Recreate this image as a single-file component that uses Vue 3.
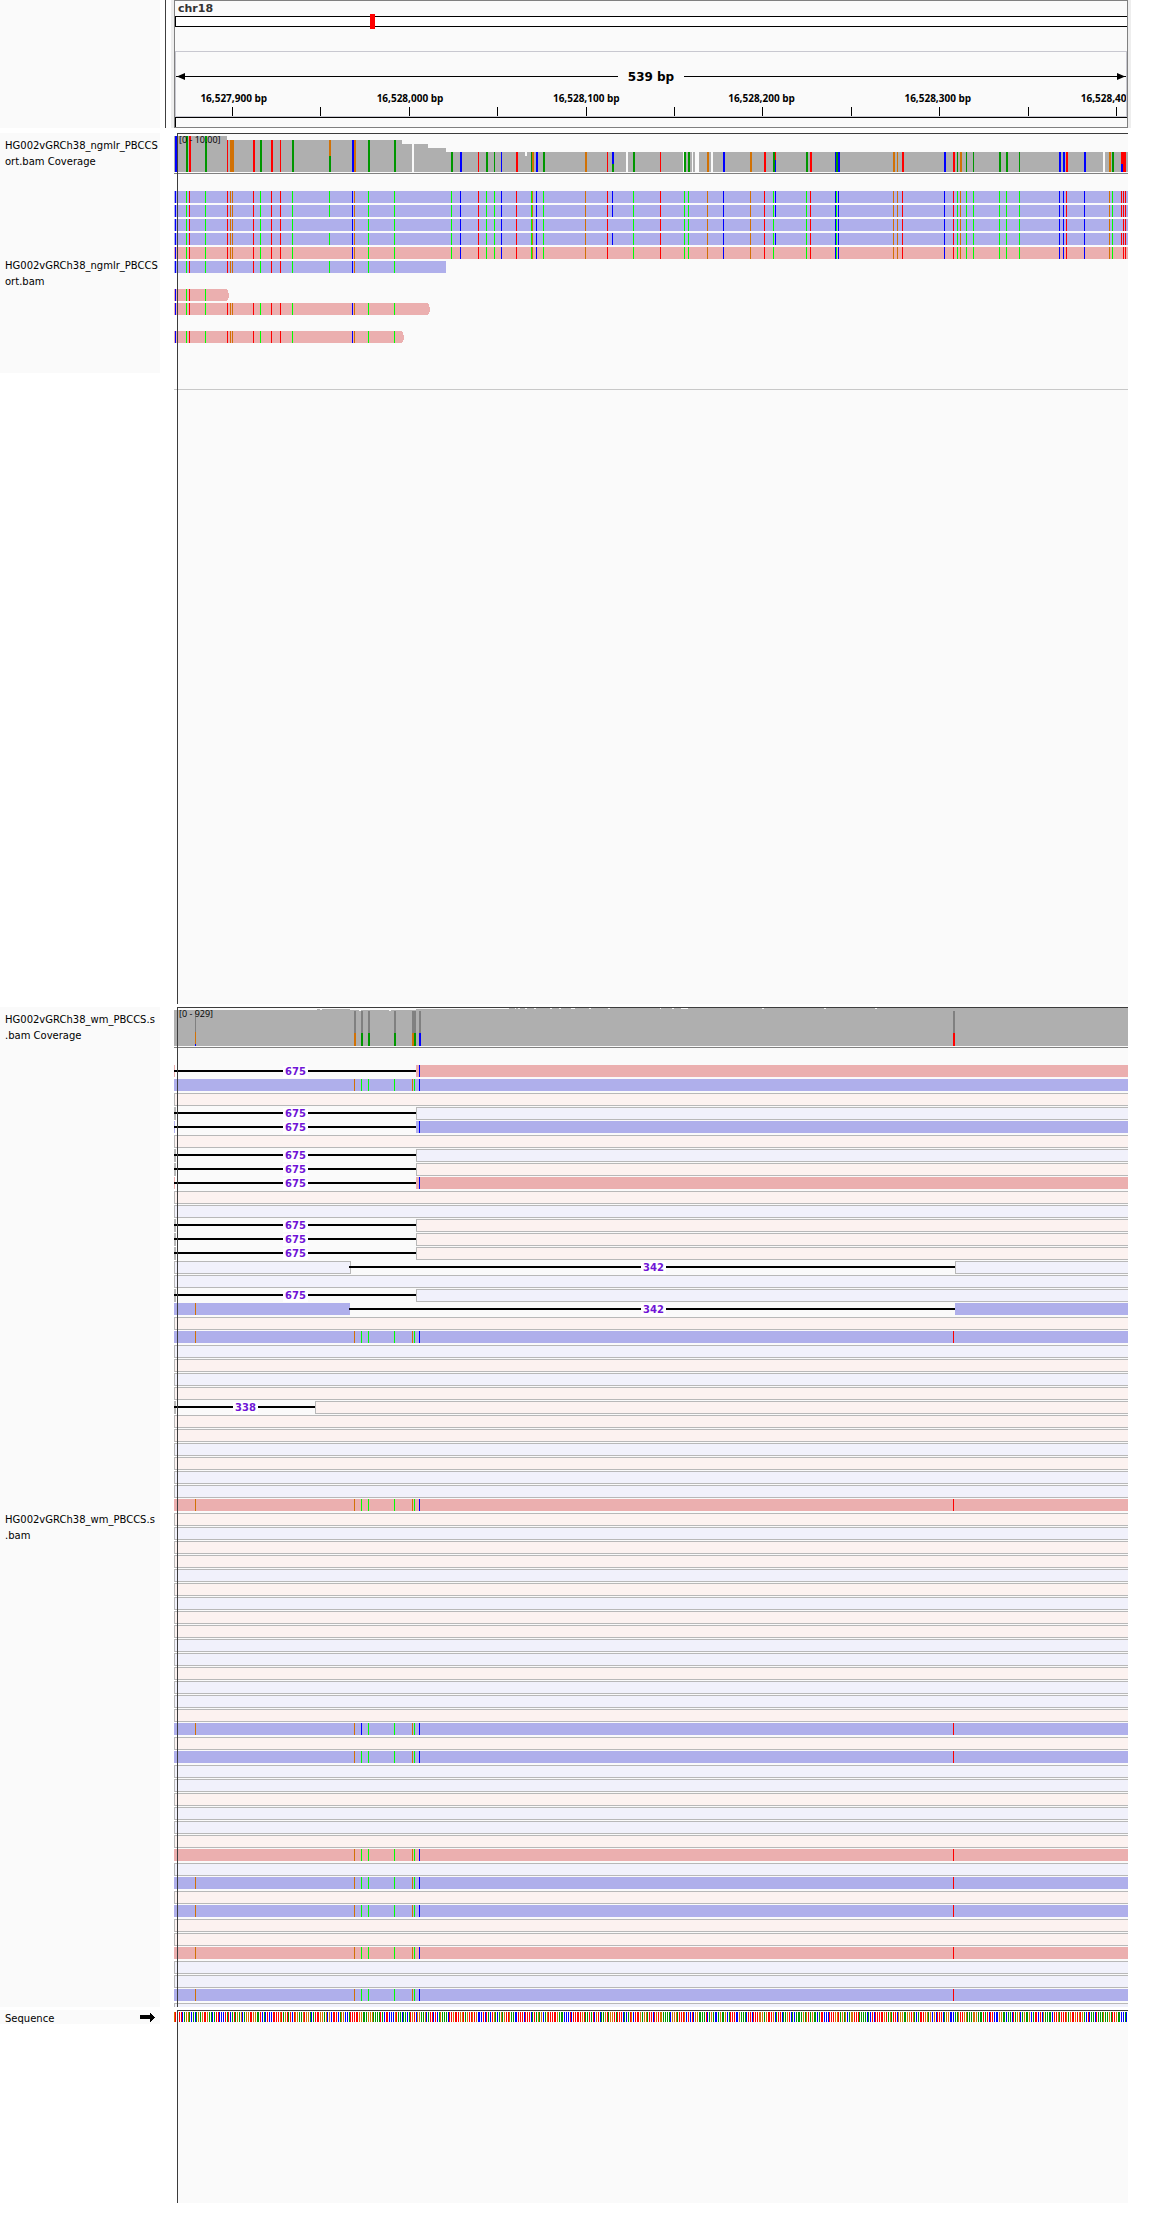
<script setup>
const W = 954
const X0 = 174
const pct = (x) => ((x - X0) / W) * 100 + '%'

const BASE = { A: '#009600', C: '#0000ff', G: '#d17105', T: '#ff0000' }
const READ_BASE = { ...BASE, A: '#00ff00' }

// Ruler
const ticks = [232, 320, 409, 497, 586, 674, 762, 851, 939, 1028, 1116]
const rulerLabels = [
  { x: 233, text: '16,527,900 bp' },
  { x: 410, text: '16,528,000 bp' },
  { x: 587, text: '16,528,100 bp' },
  { x: 763, text: '16,528,200 bp' },
  { x: 940, text: '16,528,300 bp' },
  { x: 1117, text: '16,528,400 bp' },
]

// First alignment: coverage steps [x1, x2, height]
const steps = [
  [174, 227, 36], [227, 402, 32], [402, 412, 28], [414, 428, 28], [428, 446, 24],
  [446, 525, 20], [525, 527, 16], [527, 626, 20], [628, 683, 20], [684, 692, 20],
  [693, 695, 20], [699, 711, 20], [713, 1103, 20], [1105, 1128, 20],
]
// Coverage mismatches [x, width, base, height]
const variants = [
  [175, 2, 'C', 36], [186, 2, 'A', 36], [189, 2, 'T', 36], [205, 2, 'A', 36],
  [227, 1, 'T', 32], [230, 4, 'G', 32], [253, 2, 'T', 32], [260, 2, 'A', 32],
  [271, 2, 'T', 32], [280, 1, 'T', 32], [292, 2, 'A', 32], [329, 2, 'G', 32],
  [329, 2, 'A', 16], [352, 2, 'C', 32], [354, 2, 'G', 32], [368, 2, 'A', 32],
  [394, 2, 'A', 32], [451, 2, 'A', 20], [460, 2, 'C', 20], [478, 1, 'T', 20],
  [486, 2, 'A', 20], [494, 1, 'A', 20], [501, 1, 'C', 20], [516, 2, 'T', 20],
  [531, 1, 'A', 20], [532, 2, 'G', 20], [536, 2, 'C', 20], [543, 2, 'A', 20],
  [585, 2, 'G', 20], [607, 1, 'T', 20], [612, 2, 'C', 20], [612, 2, 'A', 8],
  [633, 2, 'A', 20], [660, 1, 'T', 20], [684, 2, 'A', 20], [688, 2, 'A', 20],
  [707, 2, 'G', 20], [723, 2, 'C', 20], [750, 2, 'G', 20], [764, 2, 'T', 20],
  [773, 2, 'A', 20], [775, 1, 'T', 20], [775, 1, 'C', 12], [806, 2, 'A', 20],
  [810, 2, 'T', 20], [835, 1, 'C', 20], [836, 2, 'A', 20], [838, 2, 'C', 20],
  [893, 2, 'G', 20], [897, 1, 'G', 20], [902, 2, 'T', 20], [944, 2, 'C', 20],
  [953, 2, 'T', 20], [957, 1, 'A', 20], [960, 2, 'G', 20], [966, 1, 'A', 20],
  [973, 1, 'A', 20], [999, 2, 'A', 20], [1006, 2, 'A', 20], [1019, 1, 'A', 20],
  [1059, 2, 'C', 20], [1063, 2, 'C', 20], [1066, 2, 'T', 20], [1084, 2, 'C', 20],
  [1109, 2, 'G', 20], [1112, 2, 'A', 20], [1121, 5, 'T', 20], [1121, 2, 'C', 8],
]

const SNPS =
  '175C 186A 189T 205A 227T 230G 232G 253T 260A 271T 280T 292A 329A 352C 354G 368A 394A ' +
  '451A 460C 478T 486A 494A 501C 516T 531A 532G 536C 543A 585G 607T 612C 633A 660T 684A ' +
  '688A 707G 723C 750G 764T 773A 775C 806A 810T 835C 836A 838C 893G 897G 902T 944C 953T ' +
  '957A 960G 966A 973A 999A 1006A 1019A 1059C 1063C 1066T 1084C 1109G 1112A 1121T 1123T 1125T'
const parse = (s) => s.split(' ').filter(Boolean).map((t) => ({ x: +t.slice(0, -1), b: t.slice(-1) }))
const allSnps = parse(SNPS)
const partial = [329, 612, 775, 1121]
const snpsTo = (end, full) => allSnps.filter((s) => s.x < end && (full || !partial.includes(s.x)))

const reads1 = [
  { strand: 'rev', end: 1128, snps: snpsTo(1128, true) },
  { strand: 'rev', end: 1128, snps: snpsTo(1128, true) },
  { strand: 'rev', end: 1128, snps: snpsTo(1128, false) },
  { strand: 'rev', end: 1128, snps: snpsTo(1128, true) },
  { strand: 'fwd', end: 1128, snps: snpsTo(1128, false) },
  { strand: 'rev', end: 446, snps: snpsTo(446, true) },
  null,
  { strand: 'fwd', end: 227, tip: true, snps: snpsTo(227, false) },
  { strand: 'fwd', end: 428, tip: true, snps: snpsTo(428, false) },
  null,
  { strand: 'fwd', end: 402, tip: true, snps: snpsTo(402, false) },
]

// Second alignment
const notches = [
  [515, 1], [518, 2], [525, 2], [534, 2], [550, 2], [559, 2], [571, 4], [589, 2],
  [608, 2], [660, 1], [672, 2], [681, 7], [762, 2], [824, 2], [875, 2],
]
const variants2 = [
  [354, 'G'], [361, 'A'], [368, 'A'], [394, 'A'], [412, 'G'], [414, 'A'], [419, 'C'], [953, 'T'],
]

// P/B: solid forward/reverse read, p/b: faded read; number: deletion length; +: extra mismatch
const rowList = (
  'P675 B- p b675 B675 p b675 p675 P675 p b p675 p675 p675 b342 b b675 B342 p B+ b p b p p338 ' +
  'p p b p b b P+ p b p p b p b p p b b p b b p Bx p B ' +
  'b b p b b p P b B+ p B+ p p P+ b b B+ b'
).split(' ')
const gaps = {
  675: { from: 174, to: 416, label: 296 },
  342: { from: 349, to: 955, label: 654 },
  338: { from: 174, to: 315, label: 246 },
}
const common = '354G 361A 368A 394A 412G 414A 419C 953T'
const reads2 = rowList.map((code) => {
  const kind = code[0]
  const opt = code.slice(1)
  const gap = gaps[opt]
  const solid = kind === 'P' || kind === 'B'
  const strand = kind.toLowerCase() === 'p' ? 'fwd' : 'rev'
  let segs
  if (!gap) segs = [[174, 1130]]
  else if (opt === '342') segs = [[174, solid ? 350 : 351], [gap.to, 1130]]
  else segs = [[174, solid ? 175 : 176], [gap.to, 1130]]
  let snps = ''
  if (solid) {
    if (opt === '675') snps = '419C'
    else if (opt === '342') snps = '195G'
    else if (opt === '-') snps = common.replace(' 953T', '')
    else if (opt === '+') snps = '195G ' + common
    else if (opt === 'x') snps = '195G ' + common.replace('361A', '361C')
    else snps = common
  }
  return { solid, strand, segs, gap, len: gap ? opt : '', snps: parse(snps) }
})

// Reference sequence, in runs that start at a base index
const runs = [
  [0,
    'GTTTTCAGGACACAGAGTTGAACATTCCCTATCATAGAGCAGGTTGGAATCACTCCTTTTGTAGTATCTGGAAGTGGACATTTGGAGCGCTTTCAGGCCATTTTTGGAAAGGGAAAATACTTCCCGTAACAACATGTCGGAAGCATTCTCAGAAACTTGTTTGGTAGTGTCC'],
  [168,
    'TGTGCCCTCTACTGACAGAGTTGAACCTTTCTTTCATAGAGCAGTTTTTGAAACCCTCTTTTTGTAATATCGTCAAGTAGGTATTTCACATGCTTTGAGGATTCTGTGGAAAACGGGATTTGCTCTCGGAAAATCAGACCAGAAGCATTTCCGAAACTTCTTTGGGAGTTTGCATTCAAGTCACAAAG'],
  [355,
    'AGAGTAGAACATTCCCTTTGGTAGAGCAGGTTTAAAACACTCTTTTTGTAGATTCGGGAAGGTGACATTTGGAGCGCTTTCAGGCCCAAGTTGGAAAGGGAAATATCTTCCCGGAACAACTAGGCAGAAGCATTCTCGAAAACTTGATTTGAGTTGTGTGACTCAACTAAAGAAGATTGAACCACC'],
]
const bases = runs.flatMap(([start, seq], r) => {
  const end = r < 2 ? runs[r + 1][0] : 540
  const out = []
  for (let i = start; i < end; i++) {
    const x = Math.floor(i * 1.768)
    if (x < W) out.push({ x, color: BASE[seq[(i - start) % seq.length]] })
  }
  return out
})
</script>

<template>
  <main class="browser">
    <header class="section head">
      <div class="names head-names"></div>
      <div class="head-frame">
        <div class="head-panel">
          <div class="chromosome">
            <div class="chr-name">chr18</div>
            <div class="ideogram"><i class="locus" :style="{ left: pct(369) }"></i></div>
          </div>
          <div class="ruler">
            <div class="span-row">
              <svg class="head-left" width="9" height="7" viewBox="0 0 9 7"><path d="M0 3H2L9 0V7L2 4H0Z" /></svg>
              <i class="span-line"></i>
              <span class="span-text">539 bp</span>
              <i class="span-line"></i>
              <svg class="head-right" width="9" height="7" viewBox="0 0 9 7"><path d="M9 3H7L0 0V7L7 4H9Z" /></svg>
            </div>
            <div class="ruler-labels">
              <span v-for="l in rulerLabels" :key="l.x" class="ruler-label" :style="{ left: pct(l.x - 1) }">{{ l.text }}</span>
            </div>
            <svg class="plot" height="9" viewBox="176 0 950 9" preserveAspectRatio="none">
              <rect v-for="t in ticks" :key="t" :x="t" y="0" width="1" height="9" />
            </svg>
          </div>
          <div class="band"></div>
        </div>
      </div>
    </header>

    <section class="section first">
      <div class="names">
        <div class="name cov-name"><span>HG002vGRCh38_ngmlr_PBCCS</span><span>ort.bam Coverage</span></div>
        <div class="name short-name"><span>HG002vGRCh38_ngmlr_PBCCS</span><span>ort.bam</span></div>
      </div>
      <div class="data">
        <div class="coverage">
          <svg class="plot" height="39" viewBox="174 0 954 39" preserveAspectRatio="none">
            <rect v-for="s in steps" :key="'s' + s[0]" :x="s[0]" :y="39 - s[2]" :width="s[1] - s[0]" :height="s[2]" fill="#afafaf" />
            <rect v-for="(v, i) in variants" :key="'v' + i" :x="v[0]" :y="39 - v[3]" :width="v[1]" :height="v[3]" :fill="BASE[v[2]]" />
          </svg>
          <span class="range">[0 - 10.00]</span>
        </div>
        <div class="reads reads-first">
          <div v-for="(r, i) in reads1" :key="i" class="read">
            <svg v-if="r" class="plot" height="12" viewBox="174 0 954 12" preserveAspectRatio="none">
              <rect x="174" y="0" :width="r.end - 174" height="12" :class="r.strand" />
              <template v-if="r.tip">
                <rect :x="r.end" y="1" width="1" height="10" :class="r.strand" />
                <rect :x="r.end + 1" y="4" width="1" height="5" :class="r.strand" />
              </template>
              <rect v-for="s in r.snps" :key="s.x" :x="s.x" y="0" width="1" height="12" :fill="READ_BASE[s.b]" />
            </svg>
          </div>
        </div>
      </div>
    </section>

    <section class="section">
      <div class="names">
        <div class="name cov-name"><span>HG002vGRCh38_wm_PBCCS.s</span><span>.bam Coverage</span></div>
        <div class="name fill-name"><span>HG002vGRCh38_wm_PBCCS.s</span><span>.bam</span></div>
      </div>
      <div class="data">
        <div class="coverage">
          <svg class="plot" height="39" viewBox="174 0 954 39" preserveAspectRatio="none">
            <g fill="#afafaf">
              <rect x="174" y="3" width="954" height="36" />
              <rect x="317" y="2" width="3" height="1" />
              <rect x="322" y="2" width="28" height="1" />
              <rect x="416" y="2" width="712" height="1" />
              <rect x="509" y="1" width="619" height="1" />
            </g>
            <rect v-for="n in notches" :key="n[0]" :x="n[0]" y="1" :width="n[1]" height="1" fill="#fafafa" />
            <rect x="359" y="3" width="2" height="1" fill="#fafafa" />
            <rect x="389" y="3" width="2" height="1" fill="#fafafa" />
            <rect x="195" y="4" width="1" height="21" fill="#808080" />
            <rect x="195" y="25" width="1" height="12" :fill="BASE.G" />
            <rect x="195" y="37" width="1" height="2" :fill="BASE.C" />
            <template v-for="v in variants2" :key="v[0]">
              <rect :x="v[0]" y="4" width="2" height="22" fill="#808080" />
              <rect :x="v[0]" y="26" width="2" height="13" :fill="BASE[v[1]]" />
            </template>
          </svg>
          <span class="range">[0 - 929]</span>
        </div>
        <div class="reads reads-second">
          <div v-for="(r, i) in reads2" :key="i" class="read">
            <svg class="plot" height="13" viewBox="174 0 954 13" preserveAspectRatio="none">
              <template v-for="s in r.segs" :key="s[0]">
                <rect v-if="r.solid" :x="s[0]" y="0" :width="s[1] - s[0]" height="12" :class="r.strand" />
                <template v-else>
                  <rect :x="s[0]" y="0" :width="s[1] - s[0]" height="13" fill="#b8b8b8" />
                  <rect v-if="s[1] - s[0] > 2" :x="s[0] + 1" y="1" :width="s[1] - s[0] - 2" height="11" :class="r.strand + '-faded'" />
                </template>
              </template>
              <rect v-if="r.gap" :x="r.gap.from" y="5" :width="r.gap.to - r.gap.from" height="2" fill="#000" />
              <rect v-for="s in r.snps" :key="s.x" :x="s.x" y="0" width="1" height="12" :fill="READ_BASE[s.b]" />
            </svg>
            <span v-if="r.gap" class="gap-label" :style="{ left: pct(r.gap.label) }">{{ r.len }}</span>
          </div>
        </div>
      </div>
    </section>

    <section class="section">
      <div class="names">
        <div class="seq-name">
          <span>Sequence</span>
          <svg width="15" height="9" viewBox="0 0 15 9"><path d="M0 2H10V0H11V1H12V2H13V3H14V4H15V5H14V6H13V7H12V8H11V9H10V6H0Z" /></svg>
        </div>
      </div>
      <div class="data sequence">
        <svg class="plot" height="10" viewBox="0 0 954 10" preserveAspectRatio="none">
          <rect x="0" y="0" width="954" height="10" fill="#fff" />
          <rect v-for="b in bases" :key="b.x" :x="b.x" y="0" width="1" height="10" :fill="b.color" />
        </svg>
      </div>
    </section>
  </main>
</template>

<style>
body {
  margin: 0;
  background: #fff;
}
</style>

<style scoped>
.browser {
  display: flex;
  flex-direction: column;
  gap: 3px;
  padding-bottom: 35px;
  color: #000;
  font-family: "DejaVu Sans", sans-serif;
  font-size: 10px;
  line-height: 16px;
}
.section {
  display: grid;
  grid-template-columns: 160px minmax(0, 1fr);
}
.plot {
  display: block;
  width: 100%;
  shape-rendering: crispEdges;
}

/* header */
.head {
  margin-bottom: 2px;
}
.head-names {
  background: #fafafa;
}
.head-frame {
  margin: 0 19px 0 5px;
  padding-left: 5px;
  border-left: 1px solid #404040;
}
.head-panel {
  border: 1px solid #808080;
  box-shadow: -3px 0 0 #eee, 3px 0 0 #eee;
  margin: 0 3px;
  background: #fafafa;
}
.chromosome {
  height: 50px;
}
.chr-name {
  height: 15px;
  padding-left: 3px;
  color: #333;
  font-size: 11px;
  font-weight: bold;
  line-height: 15px;
}
.ideogram {
  position: relative;
  height: 9px;
  border: 1px solid #000;
  border-right: 0;
  background: #fff;
}
.locus {
  position: absolute;
  top: -3px;
  width: 5px;
  height: 15px;
  background: #f00;
}
.ruler {
  border: 1px solid #c8c8d0;
  overflow: hidden;
}
.span-row {
  display: flex;
  align-items: center;
  height: 38px;
  padding-top: 11px;
  box-sizing: border-box;
}
.span-line {
  flex: 1;
  height: 1px;
  background: #000;
}
.span-text {
  padding: 1px 10px 0;
  font-size: 12px;
  font-weight: bold;
}
.ruler-labels {
  position: relative;
  height: 17px;
}
.ruler-label {
  position: absolute;
  transform: translateX(-50%);
  font-family: "Open Sans", sans-serif;
  font-weight: bold;
  white-space: nowrap;
}
.band {
  height: 9px;
  border: solid #000;
  border-width: 1px 0 0 1px;
}

/* track names */
.name {
  display: flex;
  flex-direction: column;
  justify-content: center;
  box-sizing: border-box;
  padding: 2px 0 0 5px;
  overflow: hidden;
  white-space: nowrap;
  background: #fafafa;
}
.names {
  display: flex;
  flex-direction: column;
  min-width: 0;
}
.cov-name {
  height: 40px;
}
.short-name {
  height: 200px;
}
.fill-name {
  flex: 1;
}
.seq-name {
  display: flex;
  align-items: center;
  justify-content: space-between;
  height: 14px;
  padding: 0 5px;
  background: #fafafa;
}
.seq-name span {
  padding-top: 3px;
}

/* data panels */
.data {
  position: relative;
  z-index: 0;
  margin: 0 22px 0 14px;
}
.data::before {
  content: "";
  position: absolute;
  z-index: -1;
  inset: 0 0 0 3px;
  background: #fafafa;
}
.data::after {
  content: "";
  position: absolute;
  inset: 0 0 0 3px;
  border: solid #3c3c3c;
  border-width: 1px 0 0 1px;
  pointer-events: none;
}
.first .data {
  min-height: 871px;
}
.coverage {
  position: relative;
  height: 40px;
  border-bottom: 1px solid #808080;
}
.range {
  position: absolute;
  left: 5px;
  top: 0;
  font-family: "Open Sans", sans-serif;
  font-size: 9px;
  line-height: 14px;
}
.reads {
  padding-top: 17px;
}
.reads-first {
  height: 198px;
  border-bottom: 1px solid #c8c8c8;
}
.reads-second {
  height: 942px;
  overflow: hidden;
}
.read {
  position: relative;
  height: 14px;
}
.fwd {
  fill: #ebafaf;
}
.rev {
  fill: #afafeb;
}
.fwd-faded {
  fill: #fcf2f0;
}
.rev-faded {
  fill: #f1f1fb;
}
.gap-label {
  position: absolute;
  top: 1px;
  width: 25px;
  margin-left: -13px;
  background: #fff;
  color: #7014d6;
  font-weight: bold;
  line-height: 12px;
  text-align: center;
}
.sequence {
  box-sizing: border-box;
  min-height: 193px;
  padding-top: 2px;
}
</style>
